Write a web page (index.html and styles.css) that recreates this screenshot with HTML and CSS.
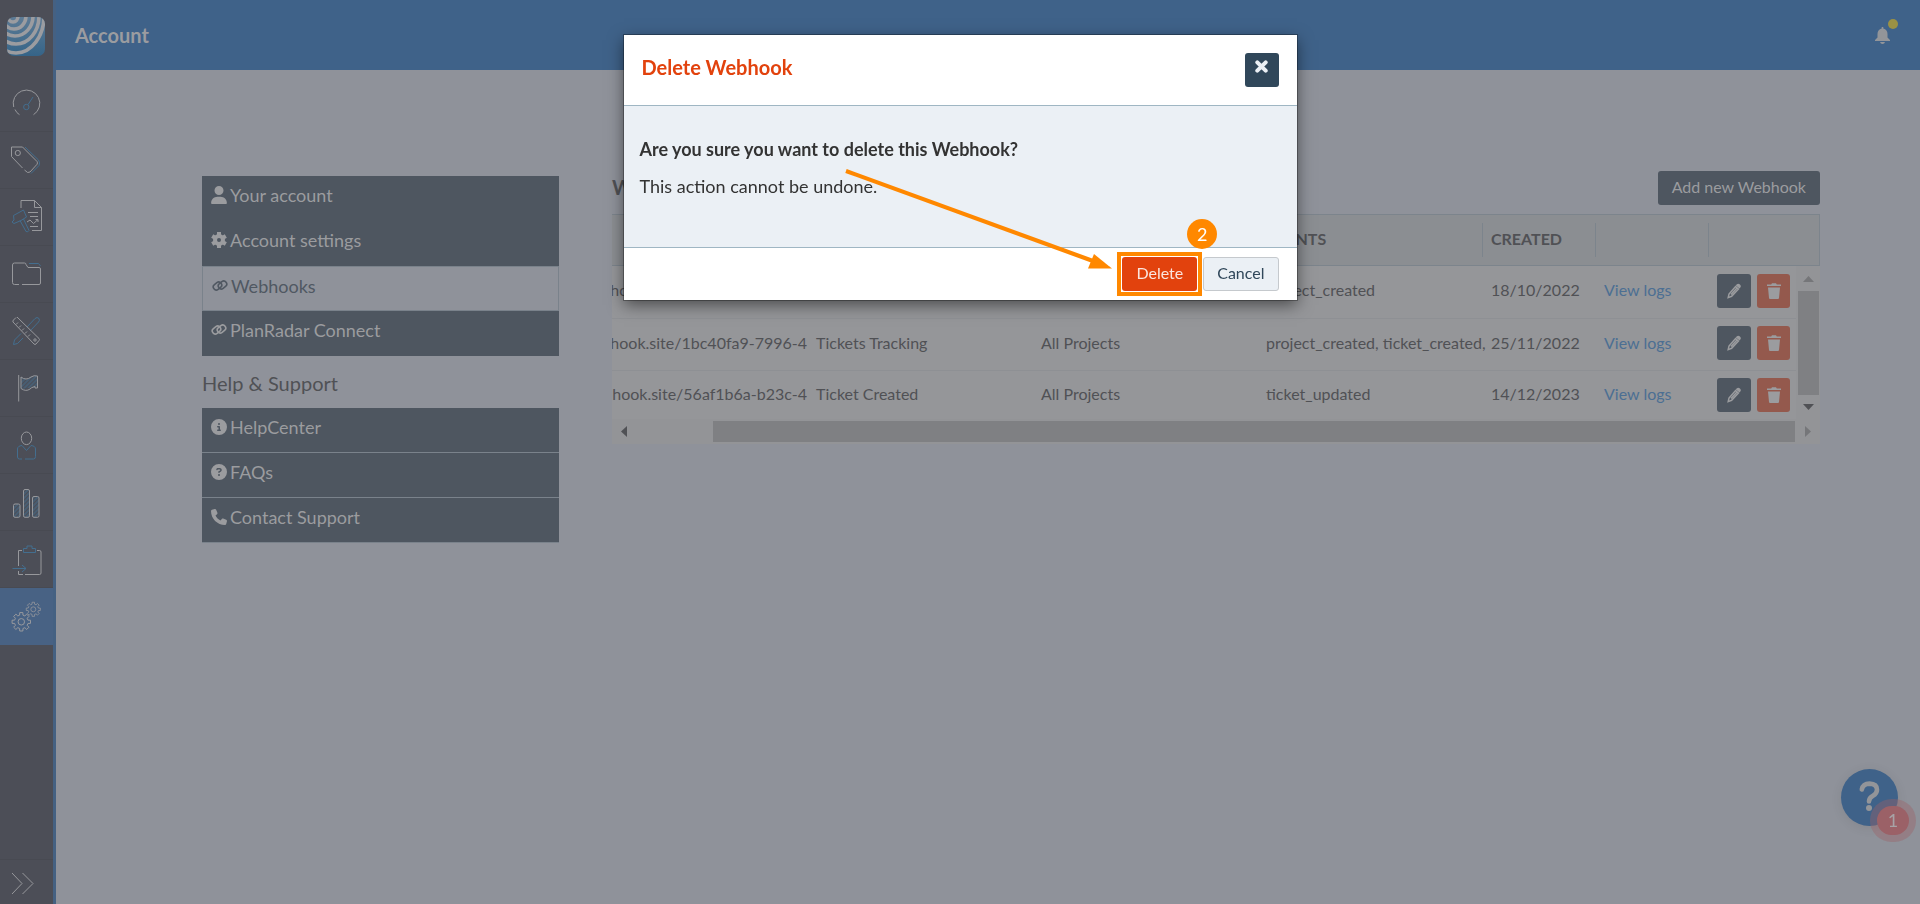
FILE: index.html
```html
<!DOCTYPE html>
<html lang="en">
<head>
    <meta charset="UTF-8">
    <meta name="viewport" content="width=device-width, initial-scale=1.0">
    <title>Account - Webhooks</title>
    <link rel="stylesheet" href="styles.css">
</head>
<body>
    <!-- shared icons -->
    <svg class="defs" width="0" height="0" aria-hidden="true">
        <defs>
            <pattern id="hatch" width="3" height="3" patternUnits="userSpaceOnUse" patternTransform="rotate(45)">
                <path class="b" d="M1 0V3"/>
            </pattern>
            <symbol id="link" viewBox="0 0 16 14">
                <g fill="none" stroke="currentColor" stroke-width="1.6">
                    <rect x="1" y="4" width="9" height="6" rx="3" transform="rotate(-38 5.500 7)"/>
                    <rect x="6" y="3" width="9" height="6" rx="3" transform="rotate(-38 10.500 6)"/>
                </g>
            </symbol>
            <symbol id="pencil" viewBox="0 0 14 16">
                <path fill="currentColor" d="M9.600 1.600 Q11 0 12.700 1.300 Q14.600 3 13.300 4.600 L12.500 5.500 L8.800 2.400Z"/>
                <path fill="none" stroke="currentColor" stroke-width="1.500" d="M8.600 3.600 L11.400 6 L4.600 13.300 L1.200 14.600 L2 11Z M9.700 5.200 L4 11.400"/>
            </symbol>
            <symbol id="trash" viewBox="0 0 14 16">
                <path fill="currentColor" d="M0 1.500H4.200L5 .3H9L9.800 1.500H14V3H0ZM1 4.500H13L12 15Q11.900 16 11 16H3Q2.100 16 2 15Z"/>
            </symbol>
            <symbol id="gear" viewBox="-10 -10 20 20" overflow="visible">
                <path fill="none" stroke="currentColor" d="M6.800 -1.700L9.400 -1.600V1.600L6.800 1.700L6 3.600L7.800 5.500L5.500 7.800L3.600 6L1.700 6.800L1.600 9.400H-1.600L-1.700 6.800L-3.600 6L-5.500 7.800L-7.800 5.500L-6 3.600L-6.800 1.700L-9.400 1.600V-1.600L-6.800 -1.700L-6 -3.600L-7.800 -5.500L-5.500 -7.800L-3.600 -6L-1.700 -6.800L-1.600 -9.400H1.600L1.700 -6.800L3.600 -6L5.500 -7.800L7.800 -5.500L6 -3.600Z"/>
                <circle r="3.300" fill="none" stroke="currentColor"/>
            </symbol>
        </defs>
    </svg>

    <div class="app">
        <nav class="sidebar">
            <a href="#" class="logo" aria-label="Home">
                <svg width="38" height="39" viewBox="0 0 38 39">
                    <defs>
                        <linearGradient id="lg" x1="0" y1="0" x2="0" y2="1">
                            <stop offset="0" stop-color="#5d7b95"/>
                            <stop offset="1" stop-color="#356488"/>
                        </linearGradient>
                        <clipPath id="lc"><rect width="38" height="39" rx="7"/></clipPath>
                    </defs>
                    <g clip-path="url(#lc)">
                        <rect width="38" height="39" fill="url(#lg)"/>
                        <g fill="none" stroke="#9b9ca0" stroke-width="3.600">
                            <ellipse cx="6" cy="-1" rx="5" ry="6"/>
                            <ellipse cx="7" cy="-1" rx="12" ry="13"/>
                            <ellipse cx="8" cy="-1" rx="18" ry="20"/>
                            <ellipse cx="9" cy="-1" rx="23" ry="28"/>
                            <ellipse cx="9" cy="-1" rx="28" ry="37"/>
                        </g>
                    </g>
                </svg>
            </a>
            <a href="#" class="nav-item" aria-label="Dashboard">
                <svg viewBox="0 0 53 57">
                    <path class="w" d="M33.500 39.700A13.300 13.300 0 1 0 13.700 32M15 34.500Q16.500 38 19.500 39.700"/>
                    <circle class="b" cx="26.300" cy="32" r="2.700"/><path class="b" d="M28 29.600L33 22"/>
                </svg>
            </a>
            <a href="#" class="nav-item" aria-label="Tickets">
                <svg viewBox="0 0 53 57">
                    <path class="w" d="M22.500 36L11.500 24.500V15H22.500L37 29.500Q38 31 37 32.300L30 40Q28 42 24.500 38"/>
                    <circle class="w" cx="17.800" cy="21" r="2.600"/>
                    <path class="b" d="M25 15L38.500 28Q40.500 31 39 33.500L31 41.500"/>
                </svg>
            </a>
            <a href="#" class="nav-item" aria-label="Reports">
                <svg viewBox="0 0 53 57">
                    <path class="w" d="M21 19V11.500H34.500L41.500 18.500V41.500H32M34.500 11.500V18.500H41.500M28 23.500H38M30 27.500H38M30 37.500H38M27 33L30 31L33.500 34.500L38 30.500M35.500 30.500H38V33"/>
                    <path class="b" d="M13.500 26.500L23.500 21L26.500 28L21 31.500L14 34.500L12 33L14 31ZM20 31.500L26 42.500Q28 43.500 29 41.500L23.500 30"/>
                </svg>
            </a>
            <a href="#" class="nav-item" aria-label="Projects">
                <svg viewBox="0 0 53 57">
                    <path class="w" d="M19 38.500H14.500Q12.500 38.500 12.500 36.500V19Q12.500 17 14.500 17H24.500Q26 17 26 18.500L28 21.500H39Q40.500 21.500 40.500 23V37Q40.500 38.500 39 38.500H22"/>
                    <path class="b" d="M29 17.500H38.500L40.500 20"/>
                </svg>
            </a>
            <a href="#" class="nav-item" aria-label="Templates">
                <svg viewBox="0 0 53 57">
                    <path class="b" d="M23 35L17.500 40.500L13.500 41.500L14.500 37L21 30.500M27 24L35 15.500Q37 13.500 39 15.500Q40 17.500 38.500 19L30 28"/>
                    <path class="w" d="M17 14L39 35.500Q40 36.500 39 37.500L36 41Q35 42 34 41L13 19Q12.500 18 13.500 17L16 14.500M16 21.500L18 19.500M19 24.500L21 22.500M22 27.500L24 25.500M25 30.500L27 28.500M28 33.500L30 31.500"/>
                    <circle class="w" cx="35" cy="37" r="1.200"/>
                </svg>
            </a>
            <a href="#" class="nav-item" aria-label="Milestones">
                <svg viewBox="0 0 53 57">
                    <path fill="url(#hatch)" d="M21 17Q26 21 31 17Q34 15 37 16V27L21 29Z"/>
                    <path class="w" d="M18.700 15V41.500M21 17Q26 21 31 17Q34 15 37.500 16V28H35V26.500Q31 27.500 30 29Q26 32 21 28.500Z"/>
                </svg>
            </a>
            <a href="#" class="nav-item" aria-label="Users">
                <svg viewBox="0 0 53 57">
                    <ellipse class="w" cx="26.500" cy="21.300" rx="5.200" ry="6.300"/>
                    <path class="b" d="M22 42H19.500Q17.500 42 17.500 40V32Q17.500 29 22 28.500L26.500 33.500L31 28.500Q35.500 29 35.500 32V39.500Q35.500 42 33.500 42H25"/>
                </svg>
            </a>
            <a href="#" class="nav-item" aria-label="Statistics">
                <svg viewBox="0 0 53 57">
                    <g fill="url(#hatch)">
                        <rect class="bar" x="13.500" y="30" width="6.500" height="13.300" rx="1.500"/>
                        <rect class="bar" x="23.500" y="15.500" width="6" height="27.800" rx="1.500"/>
                        <rect class="bar" x="32.500" y="22.500" width="6.500" height="20.800" rx="1.500"/>
                    </g>
                </svg>
            </a>
            <a href="#" class="nav-item" aria-label="Export">
                <svg viewBox="0 0 53 57">
                    <path class="w" d="M22 19.500H18.500V35M18.500 40V43.500H23M25 43.500H39.500Q41 43.500 41 42V21Q41 19.500 39.500 19.500H37"/>
                    <path class="b" d="M23.500 21.500V17.500H27V15H32V17.500H35.500V21.500ZM12.500 37.500H26M22 34L26 37.500L22 41"/>
                </svg>
            </a>
            <a href="#" class="nav-item active" aria-label="Settings">
                <svg viewBox="0 0 53 57">
                    <use href="#gear" x="11.500" y="24" width="19.600" height="19.600"/>
                    <use href="#gear" x="25.800" y="13.800" width="15" height="15"/>
                </svg>
            </a>
            <a href="#" class="nav-item expand" aria-label="Expand menu">
                <svg viewBox="0 0 53 45"><path class="w" d="M12 13L22 23.500L12 34M22.500 13L33 23.500L22.500 34"/></svg>
            </a>
        </nav>

        <div class="main">
            <header class="topbar">
                <h1>Account</h1>
                <button class="bell" aria-label="Notifications">
                    <svg width="15" height="17" viewBox="0 0 15 17"><path fill="currentColor" d="M6.700 0H8.300V1.500Q12.500 2.500 12.500 7V10.500L15 13V14H0V13L2.500 10.500V7Q2.500 2.500 6.700 1.500ZM5 15H10Q9.500 17 7.500 17T5 15Z"/></svg>
                    <span class="dot"></span>
                </button>
            </header>

            <div class="content">
                <aside class="menu">
                    <ul>
                        <li><a href="#"><svg width="16" height="18" viewBox="0 0 448 512"><path fill="currentColor" d="M224 256A128 128 0 1 0 224 0a128 128 0 1 0 0 256zm-45.700 48C79.800 304 0 383.800 0 482.300C0 498.700 13.300 512 29.700 512H418.300c16.400 0 29.700-13.300 29.700-29.700C448 383.800 368.200 304 269.700 304H178.300z"/></svg>Your account</a></li>
                        <li><a href="#"><svg width="16" height="16" viewBox="-8 -8 16 16"><circle r="4" fill="none" stroke="currentColor" stroke-width="4"/><path stroke="currentColor" stroke-width="4" d="M0 -5V-8M0 5V8M4.300 2.500L6.800 4M-4.300 -2.500L-6.800 -4M4.300 -2.500L6.800 -4M-4.300 2.500L-6.800 4"/></svg>Account settings</a></li>
                        <li class="current"><a href="#"><svg width="16" height="14"><use href="#link"/></svg>Webhooks</a></li>
                        <li><a href="#"><svg width="16" height="14"><use href="#link"/></svg>PlanRadar Connect</a></li>
                    </ul>
                    <h2>Help &amp; Support</h2>
                    <ul class="help">
                        <li><a href="#"><svg width="16" height="16" viewBox="0 0 512 512"><path fill="currentColor" d="M256 512A256 256 0 1 0 256 0a256 256 0 1 0 0 512zM216 336h24V272H216c-13.300 0-24-10.700-24-24s10.700-24 24-24h48c13.300 0 24 10.700 24 24v88h8c13.300 0 24 10.700 24 24s-10.700 24-24 24H216c-13.300 0-24-10.700-24-24s10.700-24 24-24zm40-208a32 32 0 1 1 0 64 32 32 0 1 1 0-64z"/></svg>HelpCenter</a></li>
                        <li><a href="#"><svg width="16" height="16" viewBox="0 0 512 512"><path fill="currentColor" d="M256 512A256 256 0 1 0 256 0a256 256 0 1 0 0 512zM169.800 165.300c7.900-22.300 29.100-37.300 52.800-37.300h58.300c34.900 0 63.100 28.300 63.100 63.100c0 22.600-12.100 43.500-31.700 54.800L280 264.400c-.2 13-10.900 23.600-24 23.600c-13.300 0-24-10.700-24-24V250.500c0-8.600 4.600-16.500 12.100-20.800l44.300-25.400c4.700-2.700 7.600-7.700 7.600-13.100c0-8.400-6.800-15.100-15.100-15.100H222.600c-3.400 0-6.400 2.100-7.500 5.300l-.4 1.200c-4.400 12.500-18.200 19-30.600 14.600s-19-18.200-14.600-30.600l.4-1.200zM224 352a32 32 0 1 1 64 0 32 32 0 1 1 -64 0z"/></svg>FAQs</a></li>
                        <li><a href="#"><svg width="16" height="16" viewBox="0 0 512 512"><path fill="currentColor" d="M164.900 24.600c-7.700-18.600-28-28.500-47.400-23.200l-88 24C12.100 30.200 0 46 0 64C0 311.400 200.600 512 448 512c18 0 33.800-12.100 38.600-29.500l24-88c5.300-19.400-4.600-39.700-23.200-47.400l-96-40c-16.300-6.800-35.200-2.100-46.300 11.600L304.700 368C234.300 334.700 177.300 277.700 144 207.300L193.300 167c13.700-11.200 18.400-30 11.600-46.300l-40-96z"/></svg>Contact Support</a></li>
                    </ul>
                </aside>

                <section class="webhooks">
                    <div class="section-head">
                        <h2>Webhooks</h2>
                        <button class="btn add">Add new Webhook</button>
                    </div>
                    <div class="grid">
                        <div class="grid-clip head">
                            <table>
                                <colgroup><col><col class="wide"><col class="wide"><col class="wide"><col class="small"><col class="small"><col class="end"></colgroup>
                                <thead>
                                    <tr><th>URL</th><th>NAME</th><th>PROJECTS</th><th>EVENTS</th><th>CREATED</th><th></th><th></th></tr>
                                </thead>
                            </table>
                        </div>
                        <div class="grid-body">
                            <div class="grid-clip">
                                <table>
                                    <colgroup><col><col class="wide"><col class="wide"><col class="wide"><col class="small"><col class="small"><col class="actions"></colgroup>
                                    <tbody>
                                        <tr>
                                            <td class="url">https://webhook.site/1bc40fa9-7996-4</td><td>Project Created</td><td>All Projects</td><td>project_created</td><td>18/10/2022</td>
                                            <td><a href="#">View logs</a></td>
                                            <td><div class="row-actions"><button class="btn icon" aria-label="Edit"><svg width="14" height="16"><use href="#pencil"/></svg></button><button class="btn icon remove" aria-label="Delete"><svg width="14" height="16"><use href="#trash"/></svg></button></div></td>
                                        </tr>
                                        <tr>
                                            <td class="url">https://webhook.site/1bc40fa9-7996-4</td><td>Tickets Tracking</td><td>All Projects</td><td>project_created, ticket_created,</td><td>25/11/2022</td>
                                            <td><a href="#">View logs</a></td>
                                            <td><div class="row-actions"><button class="btn icon" aria-label="Edit"><svg width="14" height="16"><use href="#pencil"/></svg></button><button class="btn icon remove" aria-label="Delete"><svg width="14" height="16"><use href="#trash"/></svg></button></div></td>
                                        </tr>
                                        <tr>
                                            <td class="url">https://webhook.site/56af1b6a-b23c-4</td><td>Ticket Created</td><td>All Projects</td><td>ticket_updated</td><td>14/12/2023</td>
                                            <td><a href="#">View logs</a></td>
                                            <td><div class="row-actions"><button class="btn icon" aria-label="Edit"><svg width="14" height="16"><use href="#pencil"/></svg></button><button class="btn icon remove" aria-label="Delete"><svg width="14" height="16"><use href="#trash"/></svg></button></div></td>
                                        </tr>
                                    </tbody>
                                </table>
                            </div>
                            <div class="vscroll">
                                <svg width="11" height="6"><path fill="#757679" d="M0 6L5.500 0L11 6Z"/></svg>
                                <span class="thumb"></span>
                                <svg width="11" height="6"><path fill="#505155" d="M0 0L5.500 6L11 0Z"/></svg>
                            </div>
                        </div>
                        <div class="hscroll">
                            <svg width="6" height="11"><path fill="#505155" d="M6 0L0 5.500L6 11Z"/></svg>
                            <span class="thumb"></span>
                            <svg width="6" height="11"><path fill="#757679" d="M0 0L6 5.500L0 11Z"/></svg>
                        </div>
                    </div>
                </section>
            </div>
        </div>
    </div>

    <button class="help-button" aria-label="Help">
        <svg width="21" height="30" viewBox="0 0 21 30"><path fill="none" stroke="#939599" stroke-width="4.600" stroke-linecap="round" d="M2.800 8.500Q4 2.600 10.500 2.600Q18 2.800 18 8.800Q18 12.500 14 14.800Q10 17 10 20.500"/><circle cx="10" cy="27" r="3" fill="#939599"/></svg>
        <span class="count">1</span>
    </button>

    <div class="modal" role="dialog" aria-labelledby="modalTitle">
        <div class="modal-header">
            <h2 id="modalTitle">Delete Webhook</h2>
            <button class="btn close" aria-label="Close">
                <svg width="13" height="13" viewBox="0 0 13 13"><path stroke="#ebf0f5" stroke-width="4" stroke-linecap="round" d="M2.300 2.300L10.700 10.700M10.700 2.300L2.300 10.700"/></svg>
            </button>
        </div>
        <div class="modal-body">
            <p><strong>Are you sure you want to delete this Webhook?</strong></p>
            <p>This action cannot be undone.</p>
        </div>
        <div class="modal-footer">
            <div class="step">
                <button class="btn delete">Delete</button>
                <span class="step-number">2</span>
                <svg class="arrow" width="268" height="104"><path fill="none" stroke="#ff8800" stroke-width="4" d="M1 4L248 94"/><path fill="#ff8800" d="M249 87L267 101.500L243 101.500Z"/></svg>
            </div>
            <button class="btn cancel">Cancel</button>
        </div>
    </div>
</body>
</html>
```
FILE: styles.css
```css
* {
    box-sizing: border-box;
}

body {
    font-family: Lato, "Liberation Sans", sans-serif;
    font-size: 16px;
    background-color: #8f929a;
    color: #505155;
    margin: 0;
}

h1, h2, p, ul {
    margin: 0;
    padding: 0;
}

ul {
    list-style: none;
}

button {
    font-family: inherit;
    cursor: pointer;
}

.defs {
    position: absolute;
}

.app {
    display: flex;
    min-height: 100vh;
}

/* sidebar */
.sidebar {
    display: flex;
    flex-direction: column;
    width: 56px;
    background-color: #4c4e57;
    border-right: 3px solid #456182;
}

.logo {
    height: 75px;
    padding: 17px 0 0 7px;
}

.nav-item {
    height: 57px;
    border-bottom: 1px solid #484a52;
    color: #999a9e;
}

.nav-item svg {
    display: block;
    width: 53px;
}

.nav-item.active {
    background-color: #486284;
    border-color: #486284;
}

.nav-item.expand {
    height: 45px;
    margin-top: auto;
    border-top: 1px solid #484a52;
    border-bottom: none;
}

.w, .bar {
    stroke: #97989c;
    stroke-width: 1;
}

.w {
    fill: none;
}

.b {
    fill: none;
    stroke: #436e8f;
    stroke-width: 1;
}

/* top bar */
.main {
    flex: 1;
    min-width: 0;
}

.topbar {
    display: flex;
    align-items: center;
    justify-content: space-between;
    height: 70px;
    padding: 0 28px 0 19px;
    background-color: #3f6289;
}

.topbar h1 {
    font-size: 20px;
    color: #9b9ca0;
}

.bell {
    position: relative;
    padding: 2px;
    border: none;
    background: none;
    color: #939599;
}

.bell svg {
    display: block;
}

.bell .dot {
    position: absolute;
    top: -6px;
    right: -6px;
    width: 10px;
    height: 10px;
    border-radius: 50%;
    background-color: #9b9144;
}

/* content */
.content {
    display: grid;
    grid-template-columns: 357fr 1208fr;
    column-gap: 53px;
    padding: 101px 100px 40px 146px;
}

.menu {
    padding-top: 5px;
    font-size: 18px;
}

.menu a {
    display: flex;
    align-items: center;
    gap: 3px;
    height: 45px;
    padding: 0 9px 7px;
    background-color: #4e5660;
    color: #9b9c9f;
    text-decoration: none;
}

.menu .current a {
    padding-bottom: 5px;
    background-color: #8f929a;
    border: 1px solid #7a828b;
    color: #505862;
}

.menu h2 {
    margin: 15px 0 13px;
    font-size: 20px;
    font-weight: normal;
    line-height: 24px;
}

.menu .help a {
    border-bottom: 1px solid #7a828b;
}

.btn {
    height: 34px;
    padding: 0 13px 4px;
    border: 1px solid transparent;
    border-radius: 3px;
    font-size: 16px;
    color: #9b9c9f;
    background-color: #4e5660;
}

.section-head {
    display: flex;
    align-items: center;
    justify-content: space-between;
    margin-bottom: 9px;
}

.section-head h2 {
    font-size: 20px;
    line-height: 24px;
    padding-bottom: 2px;
}

/* grid */
.grid {
    background-color: #959699;
}

.grid-clip {
    flex: 1;
    min-width: 0;
    overflow: hidden;
}

.grid-clip.head {
    background-color: #8b8e92;
    border: 1px solid #7c848c;
    border-left: none;
}

table {
    width: calc(100% + 100px);
    margin-left: -100px;
    table-layout: fixed;
    border-collapse: collapse;
}

.wide {
    width: 225px;
}

.small {
    width: 113px;
}

.actions {
    width: 88px;
}

.end {
    width: 111px;
}

th, td {
    height: 52px;
    padding: 0 0 4px 9px;
    text-align: left;
    white-space: nowrap;
}

th {
    height: 50px;
    background: linear-gradient(#7c848c, #7c848c) left center / 1px 34px no-repeat;
}

td {
    border-bottom: 1px solid #8e9094;
}

tr:last-child td {
    height: 49px;
    padding-bottom: 2px;
    border-bottom: none;
}

td.url {
    padding-left: 0;
    text-align: right;
}

td a {
    color: #4c6f93;
    text-decoration: none;
}

.row-actions {
    display: flex;
    gap: 6px;
    padding-top: 2px;
}

.btn.icon {
    width: 34px;
    padding: 0;
    line-height: 0;
}

.btn.remove {
    width: 33px;
    background-color: #94594d;
}

.grid-body {
    display: flex;
}

.vscroll {
    display: flex;
    flex-direction: column;
    align-items: center;
    gap: 9px;
    width: 24px;
    padding: 10px 0 9px;
    background-color: #939497;
}

.thumb {
    flex: 1;
    background-color: #7f8083;
}

.vscroll .thumb {
    width: 21px;
}

.hscroll {
    display: flex;
    align-items: center;
    height: 25px;
    padding: 0 9px;
    background-color: #939497;
}

.hscroll .thumb {
    height: 21px;
    margin: 0 10px 0 86px;
}

/* floating help */
.help-button {
    position: fixed;
    right: 22px;
    bottom: 78px;
    width: 57px;
    height: 57px;
    padding: 0;
    border: none;
    border-radius: 50%;
    background-color: #3f6289;
    box-shadow: 0 2px 12px rgba(0, 0, 0, 0.08);
}

.help-button .count {
    position: absolute;
    right: -11px;
    bottom: -9px;
    width: 32px;
    height: 29px;
    border-radius: 15px;
    background-color: #9b6167;
    box-shadow: 0 0 0 7px rgba(155, 97, 103, 0.4);
    color: #a7a3a6;
    font-size: 18px;
    line-height: 29px;
}

/* modal */
.modal {
    position: fixed;
    top: 35px;
    left: 0;
    right: 0;
    width: 36%;
    max-width: 673px;
    margin: 0 auto;
    background-color: #fff;
    box-shadow: 0 0 0 1px rgba(0, 0, 0, 0.3), 0 5px 15px rgba(0, 0, 0, 0.5);
}

.modal-header {
    display: flex;
    align-items: center;
    justify-content: space-between;
    height: 71px;
    padding: 0 18px;
    border-bottom: 1px solid #9fb6c3;
}

.modal-header h2 {
    padding-bottom: 6px;
    font-size: 20px;
    color: #e2420d;
}

.btn.close {
    width: 34px;
    padding: 0 0 8px;
    background-color: #30475a;
    line-height: 0;
}

.modal-body {
    padding: 30px 16px 47px;
    background-color: #ebf0f5;
    border-bottom: 1px solid #9fb6c3;
    color: #333;
    font-size: 18px;
    line-height: 27px;
}

.modal-body p + p {
    margin-top: 10px;
}

.modal-footer {
    display: flex;
    justify-content: flex-end;
    gap: 6px;
    padding: 9px 18px;
}

.step {
    position: relative;
}

.step::after {
    content: "";
    position: absolute;
    inset: -5px;
    border: 4px solid #ff8800;
    pointer-events: none;
}

.btn.delete {
    display: block;
    background-color: #e2420d;
    color: #fbe5de;
}

.btn.cancel {
    background-color: #ebf0f5;
    border-color: #c5c9cd;
    color: #30475a;
}

/* step marker and arrow pointing at the delete button */
.step-number {
    position: absolute;
    top: -38px;
    right: -20px;
    width: 30px;
    height: 30px;
    border-radius: 50%;
    background-color: #ff8800;
    color: #fff;
    font-size: 18px;
    line-height: 30px;
    text-align: center;
}

.arrow {
    position: absolute;
    right: 84px;
    top: -90px;
}
```
